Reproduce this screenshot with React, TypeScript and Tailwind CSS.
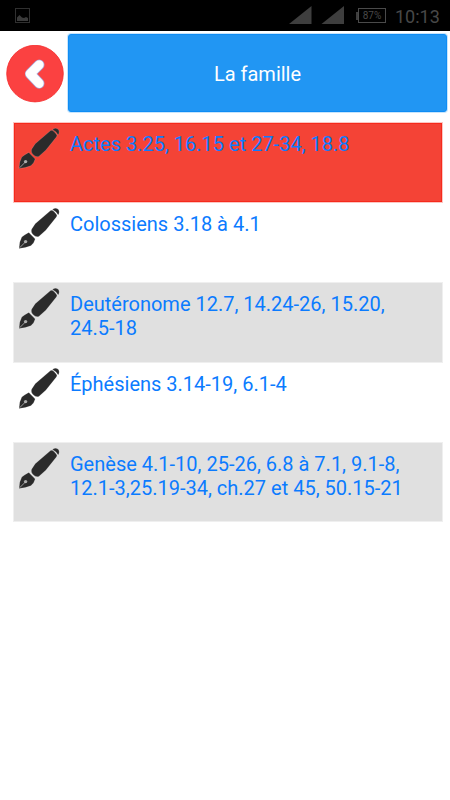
import React, { useState } from 'react';

type Passage = {
  lines: string[];
  rowClass: string;
};

const passages: Passage[] = [
  { lines: ['Actes 3.25, 16.15 et 27-34, 18.8'], rowClass: 'h-[79px] bg-[#f44336] inset-ring inset-ring-[#f62a1c] ring-1 ring-[#f44336]/30' },
  { lines: ['Colossiens 3.18 à 4.1'], rowClass: 'h-[79px]' },
  { lines: ['Deutéronome 12.7, 14.24-26, 15.20,', '24.5-18'], rowClass: 'h-[79px] bg-[#e0e0e0] ring-1 ring-[#e0e0e0]/50' },
  { lines: ['Éphésiens 3.14-19, 6.1-4'], rowClass: 'h-[79px]' },
  { lines: ['Genèse 4.1-10, 25-26, 6.8 à 7.1, 9.1-8,', '12.1-3,25.19-34, ch.27 et 45, 50.15-21'], rowClass: 'h-[78px] bg-[#e0e0e0] ring-1 ring-[#e0e0e0]/50' },
];

function PenIcon() {
  return (
    <svg className="block h-[60px] w-[56px] shrink-0" viewBox="0 0 56 60" fill="none">
      <g stroke="#fff" strokeOpacity="0.3" strokeWidth="0.5" fill="#2b2b2b" strokeLinejoin="round">
        {/* plume */}
        <path d="M5 45.4 Q5 39 7.8 34 Q11 31.4 14.8 29.4 L21.2 36 Q20 40.6 16.8 42.8 Q11.5 45.2 5 45.4 Z" />
        {/* corps */}
        <path d="M17.6 26.2 L21.2 20.8 L36.6 7.6 Q38.2 6.8 40 8.6 L42.4 11.2 Q43.6 12.6 42.4 14 L31.8 27.2 L24.8 33.4 Q21.8 34.4 19.2 31.8 Q16.6 29.2 17.6 26.2 Z" />
        {/* capuchon */}
        <path d="M38.4 6.4 Q41.6 4 44.2 6.2 Q46.2 8.8 44.2 12 Q42.4 8.4 38.4 6.4 Z" />
      </g>
      <path d="M5.8 44.6 L11 39.4" stroke="#fff" strokeOpacity="0.6" strokeWidth="0.9" />
      <circle cx="11.6" cy="38.6" r="1.7" fill="#fff" fillOpacity="0.6" />
    </svg>
  );
}

function StatusBar() {
  return (
    <div className="flex h-[31px] items-center bg-black text-[#484848]">
      {/* notification image */}
      <svg className="ml-[15px] h-[15px] w-[15px]" viewBox="0 0 15 15">
        <rect x="0.5" y="0.5" width="14" height="14" fill="none" stroke="#303030" />
        <path d="M2 13 V9.5 L4.5 7 L7 9.5 L9 10 L11 9 L13 10 V13 Z" fill="#3a3a3a" />
      </svg>
      <svg className="mt-[-2px] ml-auto h-[18px] w-[55px]" viewBox="0 0 55 18">
        <path d="M0 18 L22.5 0 V18 Z M32.5 18 L55 0 V18 Z" fill="#3e3e3e" />
      </svg>
      <div className="ml-[12px] flex items-center">
        <div className="h-2 w-[2px] bg-[#3e3e3e]" />
        <div className="flex h-[15px] w-[28px] items-center justify-center border border-[#4a4a4a] text-[10px] leading-none">87%</div>
      </div>
      <span className="mr-[10px] ml-[9px] w-[45px] pt-[2px] text-[18px] leading-none whitespace-nowrap">10:13</span>
    </div>
  );
}

export default function App() {
  const [selected, setSelected] = useState(0);

  return (
    <div className="h-[800px] w-[450px] overflow-hidden bg-white font-['Roboto',sans-serif]">
      <StatusBar />

      {/* titre + retour */}
      <div className="flex h-[92px] items-start pt-[3px]">
        <button className="mt-[11px] ml-[6px] h-[58px] w-[58px] shrink-0" aria-label="Retour">
          <svg className="block h-full w-full" viewBox="0 0 58 58" fill="none">
            <circle cx="29" cy="28.6" r="28.3" fill="#fb4141" stroke="#f52a2a" strokeWidth="0.8" />
            <path d="M33.2 19.8 L24.2 28.8 L33.2 38.4" stroke="#a7a5d5" strokeWidth="10.6" strokeLinecap="round" strokeLinejoin="round" />
            <path d="M33.2 19.8 L24.2 28.8 L33.2 38.4" stroke="#fff" strokeWidth="9" strokeLinecap="round" strokeLinejoin="round" />
          </svg>
        </button>
        <div className="ml-[4px] flex h-[78px] w-[379px] items-center justify-center rounded-[3px] border border-[#0f8df5] bg-[#2196f3] pt-px text-[20px] text-white ring-1 ring-[#2196f3]/25">
          La famille
        </div>
      </div>

      <ul className="ml-[14px] flex w-[428px] flex-col gap-px">
        {passages.map((passage, i) => (
          <li
            key={passage.lines[0]}
            onClick={() => setSelected(i)}
            aria-current={selected === i}
            className={`flex ${passage.rowClass}`}
          >
            <PenIcon />
            <div className="pt-[9px] text-[20px] leading-6 whitespace-nowrap text-[#0b7bff]">
              {passage.lines.map((line) => (
                <p key={line}>{line}</p>
              ))}
            </div>
          </li>
        ))}
      </ul>
    </div>
  );
}
